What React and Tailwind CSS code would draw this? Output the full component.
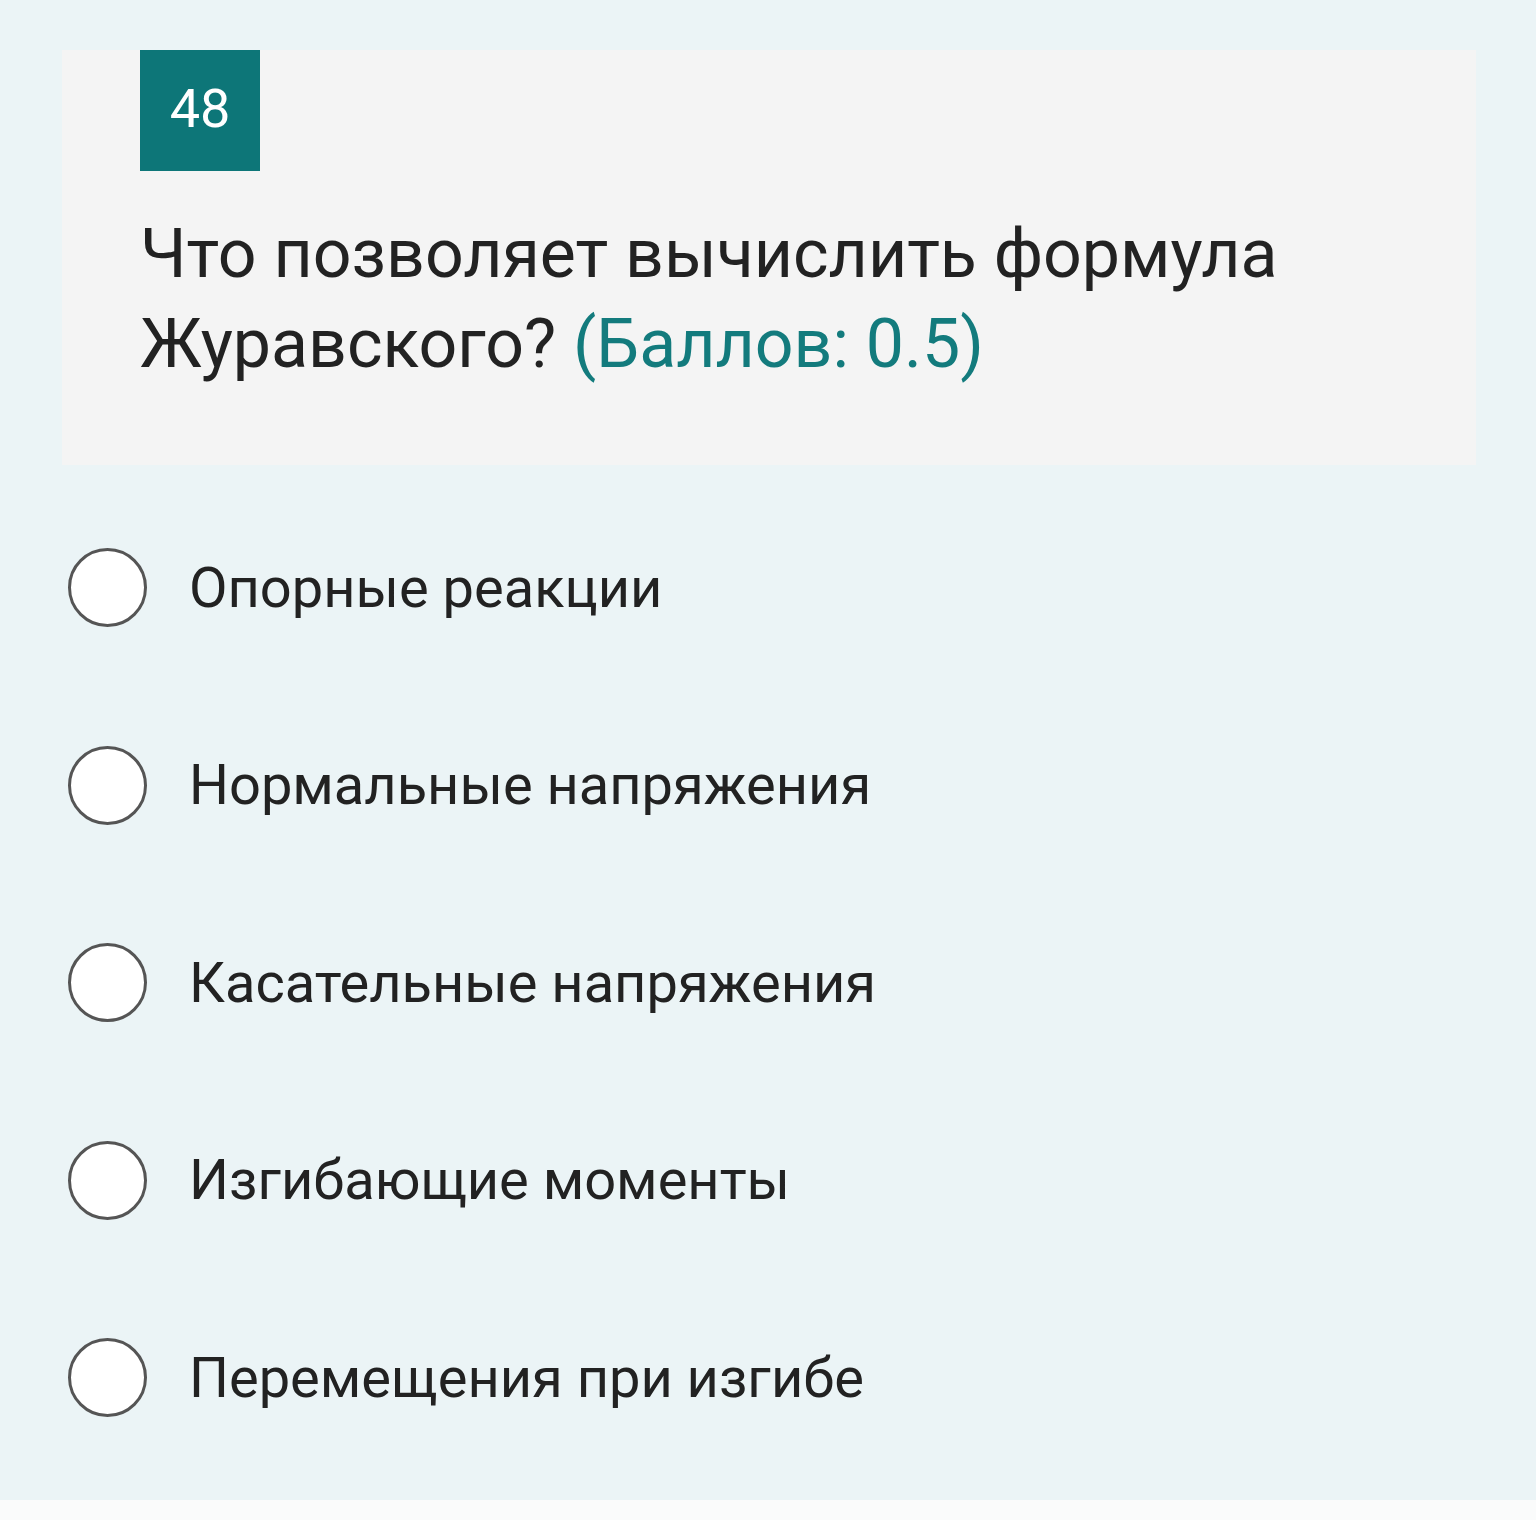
export default function App() {
  const options = [
    "Опорные реакции",
    "Нормальные напряжения",
    "Касательные напряжения",
    "Изгибающие моменты",
    "Перемещения при изгибе",
  ];
  return (
    <div className="w-[1536px] min-h-[1520px] bg-[#fafbfb]" style={{ fontFamily: "Roboto, 'Noto Sans', sans-serif" }}>
      <div className="h-[1500px] bg-[#ebf4f6] pt-[50px]">
        <div className="ml-[62px] w-[1414px] h-[415px] bg-[#f4f4f4] pl-[78px]">
          <div className="w-[120px] h-[121px] bg-[#0d7678] flex items-center justify-center text-white text-[54px] leading-none pb-[4px]">
            48
          </div>
          <div className="mt-[38px] text-[68px] leading-[90px] text-[#222222] whitespace-nowrap">
            Что позволяет вычислить формула<br />
            Журавского? <span className="text-[#137b7d]">(Баллов: 0.5)</span>
          </div>
        </div>
        <div className="mt-[24px] flex flex-col">
          {options.map((o) => (
            <div key={o} className="h-[197.5px] flex items-center pl-[68px]">
              <div className="w-[79px] h-[79px] rounded-full border-[3px] border-[#555555] bg-white shrink-0" />
              <div className="ml-[42px] text-[56px] text-[#222222] leading-none whitespace-nowrap">{o}</div>
            </div>
          ))}
        </div>
      </div>
    </div>
  );
}
